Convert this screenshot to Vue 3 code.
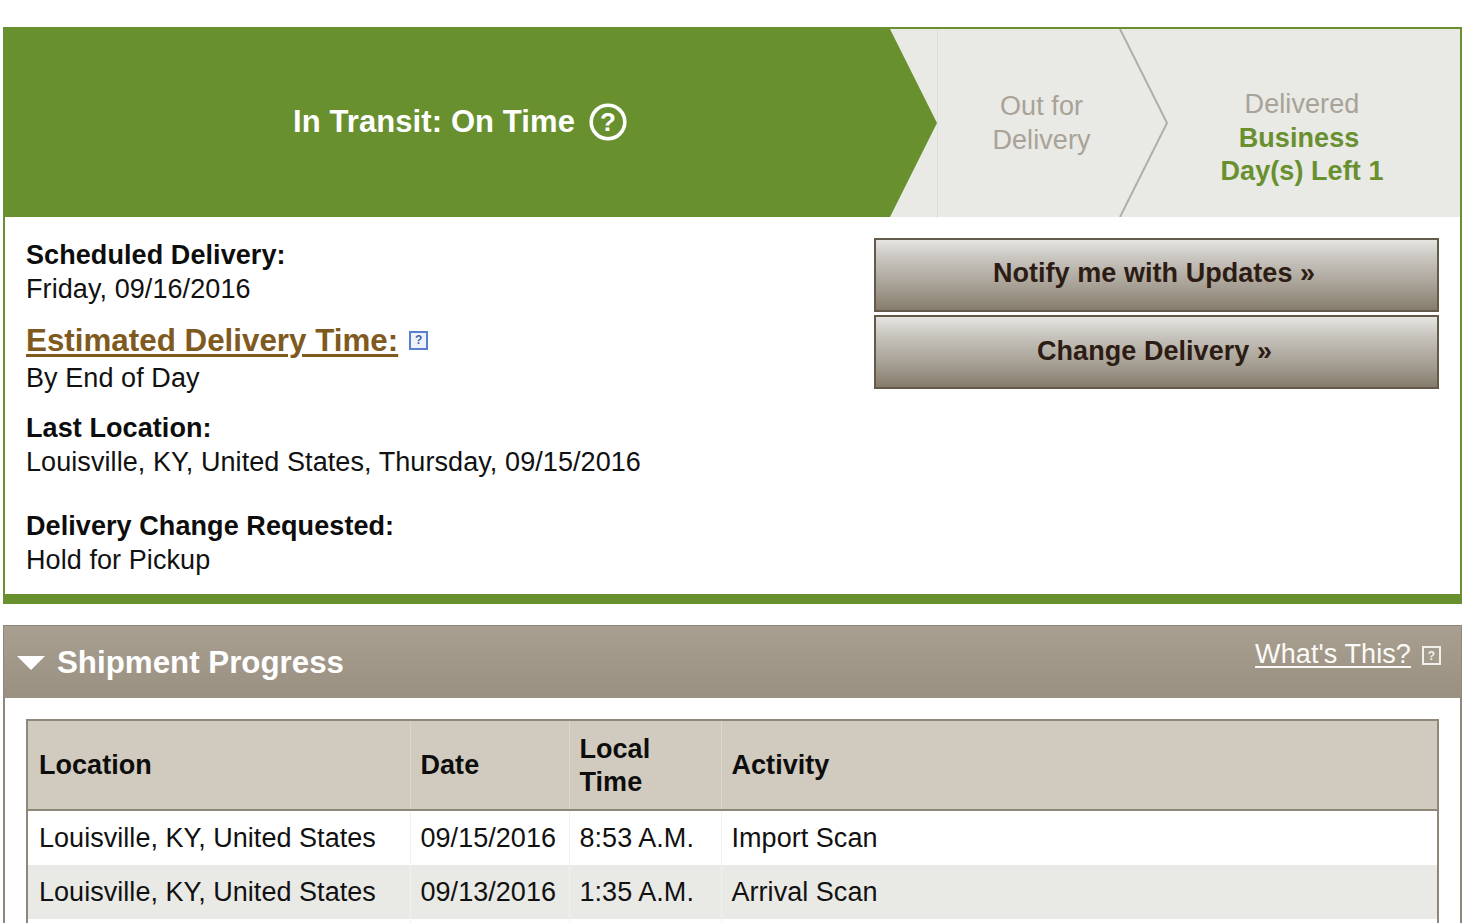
<script setup>
const rows = [
  { location: 'Louisville, KY, United States', date: '09/15/2016', time: '8:53 A.M.', activity: 'Import Scan' },
  { location: 'Louisville, KY, United States', date: '09/13/2016', time: '1:35 A.M.', activity: 'Arrival Scan' },
  { location: '', date: '', time: '', activity: '' }
]
</script>

<template>
  <div class="page">
    <section class="tracker">
      <div class="status">
        <div class="step-active">
          <span class="active-label">In Transit: On Time</span>
          <svg class="help-round" viewBox="0 0 38 38" width="38" height="38" aria-hidden="true">
            <circle cx="19" cy="19" r="16.8" fill="none" stroke="#fff" stroke-width="3.6" />
            <text x="19" y="28" text-anchor="middle" class="help-q">?</text>
          </svg>
        </div>
        <div class="step-out">Out for<br />Delivery</div>
        <div class="step-delivered">
          <div class="muted">Delivered</div>
          <div class="days"><span class="days-first">Business</span><br />Day(s) Left 1</div>
        </div>
        <svg class="chevron" viewBox="0 0 50 188" width="50" height="188" aria-hidden="true">
          <polyline points="1,0 48,94 1,188" fill="none" stroke="#b3aea5" stroke-width="2" />
        </svg>
      </div>

      <div class="details">
        <div class="info">
          <div class="group">
            <div class="label">Scheduled Delivery:</div>
            <div>Friday, 09/16/2016</div>
          </div>
          <div class="group est">
            <div class="est-row">
              <a class="est-link">Estimated Delivery Time:</a>
              <span class="help-box blue">?</span>
            </div>
            <div>By End of Day</div>
          </div>
          <div class="group last">
            <div class="label">Last Location:</div>
            <div>Louisville, KY, United States, Thursday, 09/15/2016</div>
          </div>
          <div class="group change">
            <div class="label">Delivery Change Requested:</div>
            <div>Hold for Pickup</div>
          </div>
        </div>
        <div class="actions">
          <button class="btn">Notify me with Updates »</button>
          <button class="btn">Change Delivery »</button>
        </div>
      </div>
    </section>

    <section class="progress">
      <header class="progress-head">
        <span class="triangle"></span>
        <h2 class="progress-title">Shipment Progress</h2>
        <div class="whats">
          <a class="whats-link">What's This?</a>
          <span class="help-box light">?</span>
        </div>
      </header>
      <div class="progress-body">
        <table class="table">
          <colgroup>
            <col class="c1" /><col class="c2" /><col class="c3" /><col />
          </colgroup>
          <thead>
            <tr>
              <th>Location</th>
              <th>Date</th>
              <th>Local<br />Time</th>
              <th>Activity</th>
            </tr>
          </thead>
          <tbody>
            <tr v-for="(r, i) in rows" :key="i">
              <td>{{ r.location }}</td>
              <td>{{ r.date }}</td>
              <td>{{ r.time }}</td>
              <td>{{ r.activity }}</td>
            </tr>
          </tbody>
        </table>
      </div>
    </section>
  </div>
</template>

<style scoped>
.page {
  height: 923px;
  overflow: hidden;
  box-sizing: border-box;
  padding: 27px 6px 0 3px;
  font-family: "Liberation Sans", Arial, sans-serif;
  font-size: 27px;
  line-height: 34px;
  letter-spacing: 0.08px;
  color: #111;
  background: #fff;
}
.tracker {
  border: 2px solid #68902f;
  border-bottom: 10px solid #68902f;
}
.status {
  position: relative;
  display: flex;
  height: 188px;
  background: #e9e9e5;
  margin-left: -1px;
}
.step-active {
  width: 933px;
  flex: none;
  box-sizing: border-box;
  padding-right: 21px;
  padding-bottom: 2px;
  display: flex;
  align-items: center;
  justify-content: center;
  gap: 14px;
  background: #68902f;
  clip-path: polygon(0 0, 886px 0, 100% 50%, 886px 100%, 0 100%);
}
.active-label {
  color: #fff;
  font-size: 31px;
  font-weight: 700;
  letter-spacing: 0.1px;
}
.help-round {
  flex: none;
}
.help-q {
  fill: #fff;
  font-size: 26px;
  font-weight: 700;
  font-family: "Liberation Sans", Arial, sans-serif;
}
.step-out {
  width: 232px;
  flex: none;
  box-sizing: border-box;
  padding: 60px 24px 0 0;
  text-align: center;
  color: #a9a297;
  border-left: 1px solid #dcdcd8;
  height: 189px;
}
.step-delivered {
  flex: 1;
  padding: 59px 25px 0 0;
  text-align: center;
  line-height: 33.5px;
}
.muted {
  color: #a9a297;
}
.days {
  color: #68902f;
  font-weight: 700;
}
.days-first {
  padding-right: 6px;
}
.chevron {
  position: absolute;
  top: 0;
  left: 1115px;
}
.details {
  display: flex;
  justify-content: space-between;
  padding: 21px 21px 17px 21px;
}
.label {
  font-weight: 700;
  color: #0d0d0d;
}
.est {
  margin-top: 15px;
}
.est-row {
  display: flex;
  align-items: center;
  gap: 11px;
  height: 40px;
}
.est-link {
  color: #7f5a20;
  font-size: 31.35px;
  font-weight: 700;
  letter-spacing: 0;
  text-decoration: underline;
  text-underline-offset: 3px;
}
.last {
  margin-top: 16px;
}
.change {
  margin-top: 30px;
}
.actions {
  display: flex;
  flex-direction: column;
  gap: 3px;
  width: 565px;
}
.btn {
  height: 74px;
  box-sizing: border-box;
  border: 2px solid #635a4a;
  background: linear-gradient(#e6e5e1 0%, #c9c6c0 25%, #a39c90 70%, #867c6d 100%);
  color: #2d1c14;
  font: 700 27px "Liberation Sans", Arial, sans-serif;
  letter-spacing: 0.05px;
  padding: 0 4px 2px 0;
}
.btn:first-child {
  padding: 0 5px 4px 0;
}
.help-box {
  width: 19px;
  height: 19px;
  box-sizing: border-box;
  display: inline-flex;
  align-items: center;
  justify-content: center;
  font-size: 12px;
  line-height: 1;
  font-weight: 700;
  letter-spacing: 0;
}
.help-box.blue {
  border: 2px solid #5b7fd0;
  background: #eef2fb;
  color: #4a64a8;
  margin-top: -2px;
}
.help-box.light {
  border: 2px solid #f1efea;
  background: #a39b8c;
  color: #f1efea;
  margin-top: 3px;
}
.progress {
  margin-top: 21px;
  border: 2px solid #8f8778;
  border-bottom: 0;
}
.progress-head {
  display: flex;
  align-items: center;
  height: 72px;
  box-sizing: border-box;
  padding: 1px 20px 0 13px;
  background: linear-gradient(#a99f90, #9a9082);
  color: #fff;
  margin: -1px -1px 0;
}
.triangle {
  width: 0;
  height: 0;
  border-left: 14px solid transparent;
  border-right: 14px solid transparent;
  border-top: 14px solid #fff;
  margin-right: 12px;
}
.progress-title {
  margin: 0;
  font-size: 31.3px;
  font-weight: 700;
  line-height: 34px;
  letter-spacing: 0;
}
.whats {
  margin-left: auto;
  display: flex;
  align-items: center;
  gap: 11px;
  align-self: flex-start;
  margin-top: 10px;
}
.whats-link {
  color: #fbfaf7;
  font-size: 27px;
  letter-spacing: 0.1px;
  text-decoration: underline;
  text-underline-offset: 3px;
}
.progress-body {
  padding: 21px 21px 0;
}
.table {
  width: 100%;
  border-collapse: collapse;
  table-layout: fixed;
  border: 2px solid #8f8778;
  border-bottom: 0;
  letter-spacing: 0.04px;
}
.c1 {
  width: 383px;
}
.c2 {
  width: 159px;
}
.c3 {
  width: 152px;
}
th {
  height: 87px;
  padding: 1px 10px 0;
  text-align: left;
  font-weight: 700;
  line-height: 33px;
  background: #d1cabe;
  color: #0d0d0d;
  border-bottom: 2px solid #8f8778;
  border-left: 1px solid #dcd7cd;
}
th:first-child,
td:first-child {
  border-left: 0;
  padding-left: 11px;
}
td {
  height: 54px;
  padding: 0 10px;
  border-left: 1px solid #f1f1ee;
  white-space: nowrap;
}
tbody tr:nth-child(2) td {
  background: #e9e9e5;
}
</style>

<style>
html,
body {
  margin: 0;
  background: #fff;
  overflow: hidden;
}
</style>
